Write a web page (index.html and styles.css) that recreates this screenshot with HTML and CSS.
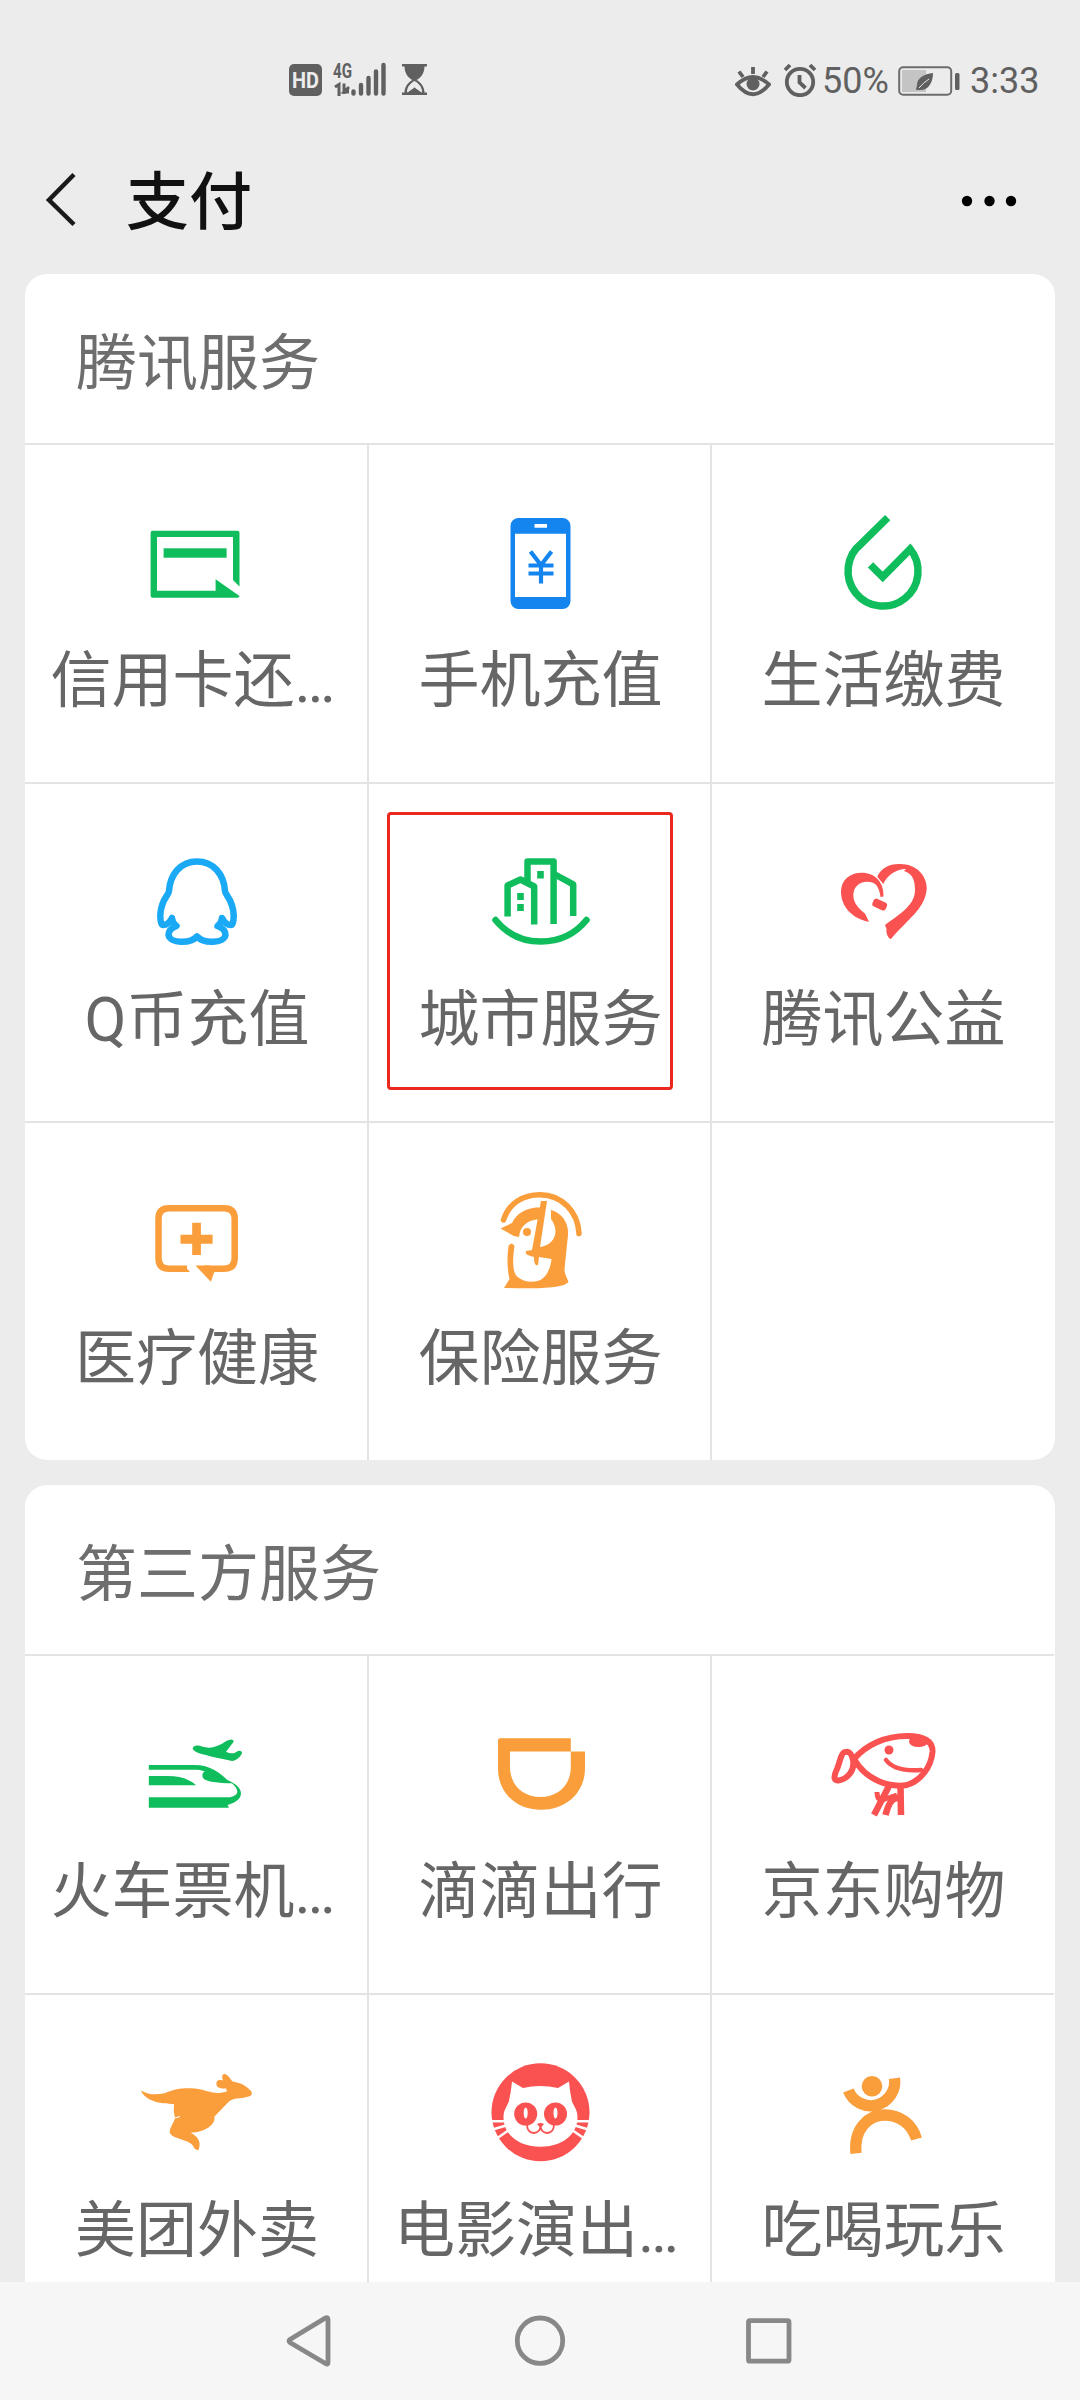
FILE: index.html
```html
<!DOCTYPE html>
<html lang="zh-CN">
<head>
<meta charset="utf-8">
<title>支付</title>
<link rel="stylesheet" href="styles.css">
</head>
<body>
<div class="screen">
  <div class="status">
    <svg class="status-left" viewBox="0 0 140 36" width="140" height="36">
      <rect x="0" y="4" width="33" height="32" rx="5"/>
      <text class="hd" x="3" y="28" textLength="27" lengthAdjust="spacingAndGlyphs">HD</text>
      <text class="net" x="44" y="18" textLength="19" lengthAdjust="spacingAndGlyphs">4G</text>
      <path class="line3" d="M46 27l4-2.500V36M55 23.500V34M55 29.500h5M60 27l-5 5l5 0"/>
      <path class="bars" d="M64.500 31.500V33.500M72 25V33.500M79.500 18V33.500M87 11.500V33.500M94.500 5V33.500"/>
      <path d="M113 4h25v2.500h-2.500c0 7-4 11.500-8 13.500c4 2 8 6.500 8 12.500h2.500V35h-25v-2.500h2.500c0-6 4-10.500 8-12.500c-4-2-8-6.500-8-13.500H113z"/>
      <path class="cut" d="M118.500 32c0-5 3-8.500 7-10.500c4 2 7 5.500 7 10.500l-7-5z"/>
    </svg>
    <div class="status-right">
      <svg class="eye" viewBox="0 0 36 32" width="36" height="32">
        <path class="line4" d="M2 19.500Q18 4.500 34 19.500Q18 39 2 19.500ZM18 9V2M8 12L4 6.500M28 12l4-5.500"/>
        <circle cx="18" cy="19" r="6.500"/>
      </svg>
      <svg class="clock" viewBox="0 0 34 34" width="34" height="34">
        <circle class="line4" cx="17" cy="19" r="13.200"/>
        <path class="line4" d="M2 7l5-5M32 7l-5-5M16.500 12v7.500l6 5.500"/>
      </svg>
      <span class="percent">50%</span>
      <svg class="battery" viewBox="0 0 62 30" width="62" height="30">
        <rect x="4" y="4" width="24" height="22" class="charge"/>
        <rect class="shell" x="1.200" y="1.200" width="52" height="27.600" rx="4"/>
        <rect x="57" y="7" width="4.500" height="17" rx="1.500"/>
        <path d="M35 7c-9 1-16 5-16 12l-1 5h3c9 1 14-7 14-17z"/>
        <path class="vein" d="M21 22q4-5 10-9"/>
      </svg>
      <span class="time">3:33</span>
    </div>
  </div>

  <header class="topbar">
    <svg class="back" viewBox="0 0 34 60" width="34" height="60"><path d="M29 3.500L4 29L29 53.500"/></svg>
    <h1>支付</h1>
    <svg class="more" viewBox="0 0 56 12" width="56" height="12"><circle cx="6" cy="6" r="5.200"/><circle cx="28.500" cy="6" r="5.200"/><circle cx="50" cy="6" r="5.200"/></svg>
  </header>

  <main class="content">
    <section class="card">
      <h2>腾讯服务</h2>
      <div class="grid">
        <div class="cell">
          <svg class="icon green" viewBox="0 0 120 120">
            <path d="M16.600 27.700H101.500a2 2 0 0 1 2 2V83.500L97 77V34H21V87.700H79.600V76.300L103.500 93a2 2 0 0 1-2 1.700H16.600a2 2 0 0 1-2-2V29.700a2 2 0 0 1 2-2z"/>
            <rect x="27.600" y="45.300" width="63" height="9.400"/>
          </svg>
          <span class="label clipped">信用卡还…</span>
        </div>
        <div class="cell">
          <svg class="icon blue" viewBox="0 0 120 120">
            <path fill-rule="evenodd" d="M38.500 15h44a8 8 0 0 1 8 8v75a8 8 0 0 1-8 8h-44a8 8 0 0 1-8-8V23a8 8 0 0 1 8-8zM35 30.700V94H86V30.700zM54.500 21v3.700H67V21z"/>
            <path class="stroke" stroke-width="4.200" d="M50.500 48.500L61 62L71.500 48.500M48.500 62.500H73.500M48.500 70.500H73.500M61 62V80.500"/>
          </svg>
          <span class="label">手机充值</span>
        </div>
        <div class="cell">
          <svg class="icon green" viewBox="0 0 120 120">
            <path class="stroke" stroke-width="7.500" d="M64.700 14.700L38.500 40.500A35 35 0 1 0 87.200 46L59.700 74L47.500 61.800"/>
          </svg>
          <span class="label">生活缴费</span>
        </div>
        <div class="cell">
          <svg class="icon sky" viewBox="0 0 120 120">
            <path class="stroke round" stroke-width="6.500" d="M61 19.500C44 19.500 34 33 33 49C33 53 25 57 24.300 73C24.300 79 25 83 27 83C31 83 34 80 36 76C36 80 38 82 40.500 84C35 86 32.500 89 32.500 93C34 101.500 54 102 61 94.500C68 102 88 101.500 89.500 93C89.500 89 87 86 81.500 84C84 82 86 80 86 76C88 80 91 83 95 83C97 83 97.700 79 97.700 73C97 57 89 53 89 49C88 33 78 19.500 61 19.500Z"/>
          </svg>
          <span class="label">Q币充值</span>
        </div>
        <div class="cell marked">
          <svg class="icon green" viewBox="0 0 120 120">
            <path class="stroke" stroke-width="6.500" stroke-linecap="round" d="M15.500 78Q33 99.500 61 99.500T106.500 78"/>
            <path class="stroke" stroke-width="6.500" stroke-linejoin="round" d="M27.600 74.500V43.500L40.500 37.500L54.200 44.500V82.500M47.500 39V19.500H73.600V82M75 32.500L93.200 42.300V74"/>
            <path d="M57.200 29h6.600v7.500h-6.600zM37.200 51h6.600v7h-6.600zM37.200 62h6.600v7h-6.600z"/>
          </svg>
          <span class="label">城市服务</span>
        </div>
        <div class="cell">
          <svg class="icon red" viewBox="0 0 120 120">
            <path d="M46 79.700C30 77 18 65 18 49.700C18 38 27 30.700 38.700 30.700C52 30.700 61 40 60.500 54.500L57.500 55C57 50 55 43 50.500 41C40 37 30.500 43 30.300 53C30.300 61 36 67 42 71.500Z"/>
            <path d="M54.300 34.700C58 26 67 21.500 77 22C93 22 103.700 33 103.700 46.300C103 66 84 78 67.700 97.300C64 95 63 90 63.500 87L62 83C80 70 92 62 92 48C92 36 88 31 81 29L83 27C72 27 64 34 60.300 42Z"/>
            <rect x="49.500" y="58.300" width="14.500" height="8.500" rx="3" transform="rotate(25 56.700 62.500)"/>
          </svg>
          <span class="label">腾讯公益</span>
        </div>
        <div class="cell">
          <svg class="icon orange" viewBox="0 0 120 120">
            <path class="stroke" stroke-width="6.500" d="M51 87.700H33Q22.500 87.700 22.500 77V38Q22.500 27.300 33 27.300H88Q98.700 27.300 98.700 38V77Q98.700 87.700 88 87.700H68"/>
            <path d="M48 84.500L54 91H48zM59.500 84.500H74L78.300 91L74.800 100.700z"/>
            <path d="M56.200 41.700h8.700v12h11.700v9H64.900V74h-8.700V62.700H44.500v-9h11.700z"/>
          </svg>
          <span class="label">医疗健康</span>
        </div>
        <div class="cell">
          <svg class="icon orange" viewBox="0 0 120 120">
            <path class="stroke" stroke-width="5.500" stroke-linecap="round" d="M23.500 39C29 22 43 13.700 60 13.700C82 13.700 98 31 99 52.500"/>
            <path d="M20.500 47.500L32 42C36 33 46 26.300 61 26.300L60 38C46 39 40 46 39 56L34 55zM71 29C82 32 89 42 88 54L84.500 88C84.500 94 88 98 88.500 101C84 107 60 108 24 107L29.500 98C27 88 27 76 28.500 65Q31.500 60 34.500 65C32 82 33 91 37 95.500C44 102 56 102 62 98C69 93 71 83 71.500 78L59 76L58 84Q54 86 54 76Q44 74 46 70L52 69L61 20H67L60 66C75 64 80 50 71 38z"/>
            <circle cx="47" cy="51" r="4"/>
          </svg>
          <span class="label">保险服务</span>
        </div>
        <div class="cell"></div>
      </div>
    </section>

    <section class="card">
      <h2>第三方服务</h2>
      <div class="grid">
        <div class="cell">
          <svg class="icon green" viewBox="0 0 120 120">
            <path d="M12.800 51H58C75 51 84 59 91.300 66C101 70 105 75 105 79.300C105 86 98 89 91.500 91L93 93.700H12.800V83.300H94C99 82 101.300 80 101.300 77.700C101 74 98 71 95.700 69.300C82 69 68 68 66.600 63C66 60 67 58 69 57.500C66 56 62 55.700 58 55.700H12.800z"/>
            <path d="M12.800 62H32C45 62 55 66 60 71.300H12.800z"/>
            <path d="M57 35.500C55.500 32 62 30.500 66 32.500Q72 34.500 78 33C86 31 90 26 95 25.500Q98 25.500 97.500 28L90 37.700Q94 40 98.500 39L102 37Q106 36 106 39.500C104 43 100 47 96 47C88 45 75 43 70 41Q60 39 57 35.500z"/>
          </svg>
          <span class="label clipped">火车票机…</span>
        </div>
        <div class="cell">
          <svg class="icon orange" viewBox="0 0 120 120">
            <path fill-rule="evenodd" d="M20 24.300H90.800V37.400H105V54C105 79 86 95.700 61.500 95.700C36 95.700 18 79 18 54V26.300Q18 24.300 20 24.300ZM30 37.400V53C30 71 43 83 60.500 83S90.800 71 90.800 53V37.400Z"/>
          </svg>
          <span class="label">滴滴出行</span>
        </div>
        <div class="cell">
          <svg class="icon red" viewBox="0 0 120 120">
            <path class="stroke" stroke-width="6" stroke-linejoin="round" d="M31 45C43 31 62 22 84 22C101 22 110 27 109.500 38C108 54 97 67 84 71C66 74 43 66 31 45ZM22.500 38C27 37 29 41 30 46C32 56 25 65 15 66.500C10 67 11 61 14 55C17 48 18 38 22.500 38Z"/>
            <path class="stroke" stroke-width="4.500" stroke-linecap="round" d="M63 46Q72 58 98 56"/>
            <circle cx="66" cy="36" r="4.500"/>
            <ellipse cx="95.500" cy="27.500" rx="9.500" ry="5.500"/>
            <path class="stroke" stroke-width="6.500" d="M66 72L51 101M77.500 72L78 101M75 84Q67 83 62.500 101"/>
            <path class="stroke" stroke-width="5" d="M54 78Q54 86 59 86L74 81"/>
          </svg>
          <span class="label">京东购物</span>
        </div>
        <div class="cell">
          <svg class="icon orange" viewBox="0 0 120 120">
            <path d="M5 37.500C13 42 20 42 28.400 40.300C38 36 46 35 54.500 35.300C67 35.500 75 41 84 40L91 38.500L90 35.500C84 36 80 34 80.500 31C80 27 83 26.500 87 27.500C85 23 87 20 90 21.500C94 24 94 26 96.500 28.500C106 30 110 33 115.500 38.500Q117 43 111 44C105 46 96 44 91.300 50.300L78.300 63.700C80 71 70 79 54.500 79.700C61 83 66 88 62.500 97C57 97 59 93 54 90C47 86 36 85 34 80.300C33 75 37 72 39 65Q37 58 38 51C25 51 9 48 5 37.500z"/>
            <path class="crease" d="M39 65l5-1.500"/>
          </svg>
          <span class="label">美团外卖</span>
        </div>
        <div class="cell">
          <svg class="icon red" viewBox="0 0 120 120">
            <circle cx="60.500" cy="59.300" r="49"/>
            <path class="white" d="M32 28.500L43 35Q60 31 78 35L89 28.500Q90 40 92 48.700C94 53 97.500 57 97.500 64C97.500 82 82 93.700 60.500 93.700S23.500 82 23.500 64C23.500 57 27 53 28.800 48.700Q31 40 32 28.500z"/>
            <path class="whisker" d="M10 68.300H25M11 77L26 72.500M16 86L29 77M111 68.300H96M110 77L95 72.500M105 86L92 77"/>
            <circle cx="45.700" cy="61" r="11.500"/><circle cx="75.500" cy="61" r="11.500"/>
            <ellipse class="white" cx="45.700" cy="60" rx="2" ry="5.500"/><ellipse class="white" cx="75.500" cy="60" rx="2" ry="5.500"/>
            <path d="M57 71Q60.500 69 64 71L60.500 75z"/>
            <path class="stroke" stroke-width="1.800" d="M47 71Q47 80 54 80Q60.500 79 60.500 73Q60.500 79 67 80Q74 80 74 71"/>
          </svg>
          <span class="label clipped">电影演出…</span>
        </div>
        <div class="cell">
          <svg class="icon orange" viewBox="0 0 120 120">
            <circle cx="49" cy="33.300" r="10.300"/>
            <path class="stroke" stroke-width="11.300" d="M25.400 37.500A24 24 0 0 0 71.500 25.300M33 100.300C30.500 76 45 62 61.500 62C77 62 89 71 93.500 86"/>
          </svg>
          <span class="label">吃喝玩乐</span>
        </div>
      </div>
    </section>
  </main>

  <nav class="navbar">
    <svg viewBox="0 0 60 60"><path d="M47 8.500V51.500Q47 54 44.500 52.500L9 31.500Q7 30 9 28.500L44.500 7Q47 6 47 8.500Z"/></svg>
    <svg viewBox="0 0 60 60"><circle cx="30" cy="29.700" r="22.700"/></svg>
    <svg viewBox="0 0 60 60"><rect x="9.500" y="9.700" width="40.500" height="40.500" rx="1.500"/></svg>
  </nav>
</div>
</body>
</html>
```
FILE: styles.css
```css
*, *::after { box-sizing: border-box; }

body {
  margin: 0;
  background: #ececec;
  font-family: Roboto, "Noto Sans CJK SC", sans-serif;
}

.screen {
  width: 1080px;
  height: 2400px;
  display: flex;
  flex-direction: column;
  overflow: hidden;
}

.status {
  flex: none;
  height: 128px;
  padding: 60px 44px 0 289px;
  display: flex;
  justify-content: space-between;
  align-items: flex-start;
  color: #606060;
}

.status svg { fill: #606060; display: block; }
.status-right { display: flex; align-items: center; height: 42px; font-size: 36px; line-height: 43px; }
.status .hd { fill: #ececec; font-weight: 700; font-size: 22px; }
.status .net { font-weight: 700; font-size: 21px; }
.status .line3 { fill: none; stroke: #606060; stroke-width: 3; }
.status .line4 { fill: none; stroke: #606060; stroke-width: 3.8; }
.status .bars { fill: none; stroke: #606060; stroke-width: 4.4; stroke-linecap: round; }
.status .cut, .status .vein { fill: none; stroke: #ececec; stroke-width: 1; }
.status .cut { fill: #ececec; }
.status .charge { fill: #c4c4c4; }
.status .shell { fill: none; stroke: #6c6c6c; stroke-width: 2; }
.status .clock { margin: -2px 5px 0 12px; }
.status .battery { margin: 0 10px 0 12px; }
.percent { width: 64px; }
.time { width: 66px; }

.topbar {
  flex: none;
  height: 146px;
  padding: 0 63px 0 45px;
  display: flex;
  align-items: center;
}

.back { fill: none; stroke: #1a1a1a; stroke-width: 4.5; }
.more { margin-left: auto; fill: #000; }

h1 {
  margin: 3px 0 0 47px;
  font-size: 63px;
  line-height: 80px;
  font-weight: 500;
  color: #111;
}

.content {
  flex: 1;
  min-height: 0;
  overflow: hidden;
  padding: 0 25px;
}

.card {
  background: #fff;
  border-radius: 22px;
  overflow: hidden;
  margin-bottom: 25px;
}

h2 {
  margin: 0;
  height: 169px;
  padding: 4px 0 0 51px;
  font-size: 61px;
  line-height: 172px;
  font-weight: 400;
  color: #6e6e6e;
}

.grid { display: grid; grid-template-columns: 344px 343px 343px; }

.cell {
  position: relative;
  height: 339px;
  border-top: 2px solid #e3e3e3;
  border-right: 2px solid #e3e3e3;
  padding-top: 58px;
  display: flex;
  flex-direction: column;
  align-items: center;
}

.cell:nth-child(3n) { border-right-color: transparent; }

.marked::after {
  content: "";
  position: absolute;
  left: 18px;
  top: 28px;
  width: 286px;
  height: 278px;
  border: 3px solid #ea281e;
  border-radius: 4px;
}

.label {
  margin: 18px 0 0 2px;
  font-size: 61px;
  line-height: 80px;
  color: #666;
  white-space: nowrap;
}

.label.clipped { margin-left: -6px; }

.icon { width: 120px; height: 120px; display: block; fill: currentColor; }
.icon .stroke { fill: none; stroke: currentColor; }
.icon .round { stroke-linejoin: round; }
.icon .white { fill: #fff; }
.icon .whisker { fill: none; stroke: #fff; stroke-width: 2.6; }
.icon .crease { fill: none; stroke: #fff; stroke-width: 1.2; }
.green { color: #10bd5c; }
.blue { color: #1485ee; }
.sky { color: #1aa9f5; }
.red { color: #fa5151; }
.orange { color: #fa9d3b; }

.navbar {
  flex: none;
  height: 118px;
  background: #f6f6f6;
  display: flex;
  justify-content: center;
  align-items: center;
  gap: 169px;
}

.navbar svg { width: 60px; height: 60px; fill: none; stroke: #888; stroke-width: 4.8; }
```
